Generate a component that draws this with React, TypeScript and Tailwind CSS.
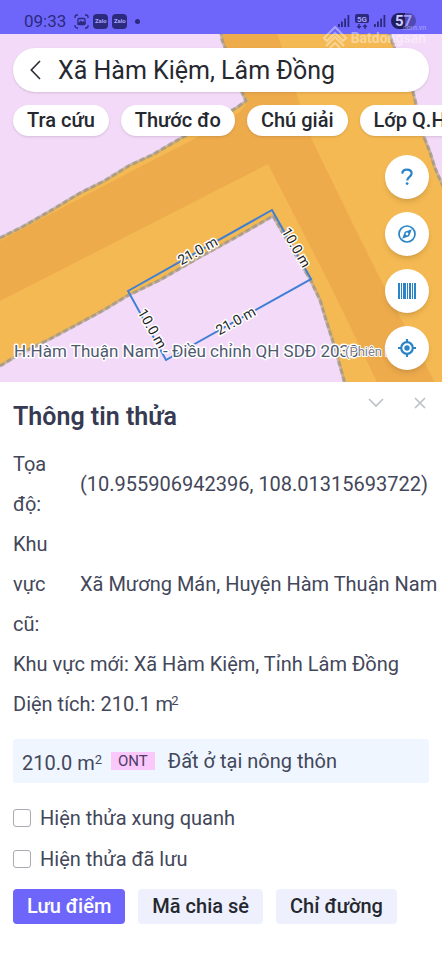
import React, { useState } from "react";

const mapTools = ["help", "compass", "barcode", "locate"] as const;
type Tool = (typeof mapTools)[number];

const toolLabels: Record<Tool, string> = {
  help: "Trợ giúp",
  compass: "La bàn",
  barcode: "Quét mã",
  locate: "Vị trí của tôi",
};

function ToolIcon({ tool }: { tool: Tool }) {
  if (tool === "help") {
    return (
      <svg width="20" height="20" viewBox="0 0 20 20" fill="none" stroke="#2b84c6" strokeWidth="2.200">
        <path d="M5.200 6.600C5.400 4 7.300 2.600 9.900 2.600c2.700 0 4.700 1.500 4.700 3.900 0 3.200-4.400 3.400-4.400 6.900" />
        <circle cx="10.100" cy="16.600" r="1.400" fill="#2b84c6" stroke="none" />
      </svg>
    );
  }
  if (tool === "compass") {
    return (
      <svg width="20" height="20" viewBox="0 0 20 20" fill="none">
        <circle cx="10" cy="10" r="8" stroke="#2b84c6" strokeWidth="1.700" />
        <path fillRule="evenodd" d="M14.800 5.200 12.200 12.200 5.200 14.800 7.800 7.800ZM10 8.600a1.400 1.400 0 1 0 0 2.800 1.400 1.400 0 0 0 0-2.800Z" fill="#2b84c6" />
      </svg>
    );
  }
  if (tool === "barcode") {
    return (
      <svg width="20" height="20" viewBox="0 0 20 20" fill="#2b84c6">
        <path d="M1 2h2v16H1zM4 2h1v16H4zM6 2h3v16H6zM10 2h1v16h-1zM12 2h2v16h-2zM15 2h1v16h-1zM17 2h2v16h-2z" />
      </svg>
    );
  }
  return (
    <svg width="20" height="20" viewBox="0 0 20 20" fill="none" stroke="#2b84c6" strokeWidth="2.200">
      <circle cx="10" cy="10" r="5.800" />
      <circle cx="10" cy="10" r="2.700" fill="#2b84c6" stroke="none" />
      <path d="M10 1v3.500M10 15.500V19M1 10h3.500M15.500 10H19" />
    </svg>
  );
}

const upperEdge = "M0 238 22 227 50 211 80 193 104 181 130 165 152 155 183 137 212 122 236 108 246 101 240 88 230 60 222 40 221 32";
const rightEdge = "M389 32 394 47 404 68 413 92 417 108 424 137 430 152 435 168 442 184 460 220";
const lowerEdge = "M0 366 20 354 50 339 80 323 104 310 127 296 160 280 200 257 240 235 273 216 288 242 310 279 320 300 326 320 334 345 340 366 345 384";

function ZoneEdge({ d }: { d: string }) {
  return (
    <g fill="none" strokeLinejoin="round">
      <path d={d} stroke="#b0a08c" strokeOpacity="0.600" strokeWidth="3" />
      <path d={d} stroke="#98927f" strokeOpacity="0.600" strokeWidth="3" strokeDasharray="5 3" />
    </g>
  );
}

const sides = [
  { x: 200, y: 255, angle: -29, text: "21.0 m" },
  { x: 292, y: 250, angle: 60, text: "10.0 m" },
  { x: 238, y: 325, angle: -29, text: "21.0 m" },
  { x: 148, y: 331, angle: 60, text: "10.0 m" },
];

function ParcelMap() {
  return (
    <svg
      className="absolute inset-0 h-full w-full"
      viewBox="0 34 442 348"
      preserveAspectRatio="xMidYMid slice"
      fontFamily='Roboto, "Noto Sans", sans-serif'
    >
      <rect x="0" y="34" width="442" height="348" fill="#f3daf8" />
      <path
        fill="#f4b952"
        d="M0 238 22 227 50 211 80 193 104 181 130 165 152 155 183 137 212 122 236 108 246 101 240 88 230 60 222 40 221 32 389 32 394 47 404 68 413 92 417 108 424 137 430 152 435 168 442 184V384H345L340 366 334 345 326 320 320 300 310 279 288 242 273 216 240 235 200 257 160 280 127 296 104 310 80 323 50 339 20 354 0 366Z"
      />
      <path
        fill="#eeab4c"
        d="M0 241 60 209 130 172 200 136 240 112 248 101 241 88 231 60 223 40V32H277L296 92 312 140 350 218 392 302 436 384H378L330 285 268 164 0 301Z"
      />
      <ZoneEdge d={upperEdge} />
      <ZoneEdge d={rightEdge} />
      <ZoneEdge d={lowerEdge} />
      <path d="M128 291 272 210 311 279 166 360Z" fill="none" stroke="#3f7fd4" strokeWidth="2" />
      <g fontSize="14" textAnchor="middle" fill="#1f1f24" stroke="#fff" strokeWidth="3" strokeLinejoin="round" paintOrder="stroke">
        {sides.map((s) => (
          <text key={`${s.x}-${s.y}`} transform={`translate(${s.x} ${s.y}) rotate(${s.angle})`}>
            {s.text}
          </text>
        ))}
      </g>
      <g fill="#4f5a70" stroke="#fff" strokeWidth="3" strokeLinejoin="round" paintOrder="stroke">
        <text x="14" y="357" fontSize="17">H.Hàm Thuận Nam - Điều chỉnh QH SDĐ 2030</text>
        <text x="345" y="356" fontSize="13" fill="#7d7f92" strokeWidth="2">(Phiên bản</text>
      </g>
    </svg>
  );
}

function SignalBars() {
  return (
    <svg width="12" height="12" viewBox="0 0 12 12" fill="#2c2a7c">
      <path d="M0 9h1.800v3H0zM3 6.500h1.800V12H3zM6.200 3.500H8V12H6.200zM9.500 0h1.800v12H9.500z" />
    </svg>
  );
}

function ZaloBadge() {
  return (
    <span className="flex h-[15px] w-[15px] items-center justify-center rounded-[4px] bg-[#2c2a7c] text-[6px] font-bold leading-none text-[#a9a4ff]">
      Zalo
    </span>
  );
}

function StatusBar() {
  return (
    <header className="flex h-[34px] items-center justify-between bg-[#6e66fb] pl-6 pr-[26px] pt-2 text-[#2c2a7c]">
      <div className="flex items-center gap-1">
        <span className="mr-1 text-[17px] leading-5">09:33</span>
        <svg width="15" height="15" viewBox="0 0 15 15" fill="none" stroke="#2c2a7c" strokeWidth="1.300">
          <path d="M1 4V3a2 2 0 0 1 2-2h1M11 1h1a2 2 0 0 1 2 2v1M14 11v1a2 2 0 0 1-2 2h-1M4 14H3a2 2 0 0 1-2-2v-1" />
          <rect x="4" y="4.500" width="7" height="6" rx="1" />
          <path d="m4.500 10 2.300-2.500 1.500 1.300 1.200-1 1.500 1.700z" fill="#2c2a7c" />
        </svg>
        <ZaloBadge />
        <ZaloBadge />
        <span className="ml-1 h-[5px] w-[5px] rounded-full bg-[#2c2a7c]" />
      </div>
      <div className="flex items-center gap-[5px]">
        <SignalBars />
        <svg width="14" height="15" viewBox="0 0 14 15">
          <rect width="14" height="9" rx="2" fill="#2c2a7c" />
          <text x="7" y="7.500" fontSize="8" fontWeight="700" textAnchor="middle" fill="#a9a4ff" fontFamily="Roboto, sans-serif">5G</text>
          <path d="M4 15 1.500 12h1.800v-2h1.400v2h1.800zM10 10l2.500 3h-1.800v2H9.300v-2H7.500z" fill="#2c2a7c" />
        </svg>
        <SignalBars />
        <span className="flex h-4 w-[25px] items-center justify-center rounded-full bg-linear-to-r from-[#211f5e] from-55% to-[#5049b4] to-55% text-[15px] font-bold leading-none text-[#cfcbff]">
          5<span className="text-[#a19bf5]">7</span>
        </span>
      </div>
    </header>
  );
}

function Watermark() {
  return (
    <div className="pointer-events-none absolute right-4 top-[26px] z-10 flex items-start gap-1 text-white opacity-40">
      <svg width="24" height="24" viewBox="0 0 24 24" fill="none" stroke="currentColor" strokeWidth="2">
        <path d="M1 12 12 1l11 11-3 3-8-8-8 8zM3 20l9-9 9 9M7 22l5-5 5 5" />
      </svg>
      <div className="flex flex-col items-end">
        <span className="text-[7px] leading-[5px]">.com.vn</span>
        <span className="text-[14px] font-bold leading-[14px]">Batdongsan</span>
      </div>
    </div>
  );
}

function CheckOption({ label }: { label: string }) {
  const [on, setOn] = useState(false);
  return (
    <label className="flex items-center gap-[9px]">
      <input
        type="checkbox"
        checked={on}
        onChange={(e) => setOn(e.target.checked)}
        className="h-[18px] w-[18px] appearance-none rounded-[3px] border border-[#a9abb3] bg-white checked:bg-[#6e66fb]"
      />
      {label}
    </label>
  );
}

const chips = ["Tra cứu", "Thước đo", "Chú giải", "Lớp Q.H"];

export default function App() {
  return (
    <div className="relative min-h-screen overflow-hidden bg-white font-[Roboto,'Noto_Sans',sans-serif] text-[#43475a]">
      <StatusBar />
      <Watermark />

      <section className="relative overflow-hidden pb-3 pt-[14px]">
        <ParcelMap />
        <div className="relative z-20 mx-[13px] flex h-11 items-center rounded-full bg-white pl-4 shadow">
          <button type="button" aria-label="Quay lại" className="flex shrink-0">
            <svg width="12" height="20" viewBox="0 0 12 20" fill="none" stroke="#2a2c33" strokeWidth="1.600">
              <path d="M11 1 2.300 10l8.700 9" />
            </svg>
          </button>
          <input
            type="text"
            aria-label="Tìm kiếm khu vực"
            defaultValue="Xã Hàm Kiệm, Lâm Đồng"
            className="ml-[17px] h-full min-w-0 flex-1 bg-transparent text-[25px] text-[#26282f] outline-none"
          />
        </div>

        <nav className="relative -mb-1 mt-[13px] flex gap-3 overflow-x-hidden pb-1 pl-[13px]">
          {chips.map((c) => (
            <button
              key={c}
              type="button"
              className="h-[31px] shrink-0 whitespace-nowrap rounded-full bg-white px-[14px] text-[20px] font-medium leading-[31px] text-[#26282f] shadow"
            >
              {c}
            </button>
          ))}
        </nav>

        <div className="relative mr-[13px] mt-[19px] flex flex-col items-end gap-[13px]">
          {mapTools.map((t) => (
            <button
              key={t}
              type="button"
              aria-label={toolLabels[t]}
              className="flex h-11 w-11 items-center justify-center rounded-full bg-white shadow-md"
            >
              <ToolIcon tool={t} />
            </button>
          ))}
        </div>
      </section>

      <section className="px-[13px] pb-9 text-[20px] leading-10">
        <div className="flex items-start justify-between pt-[15px]">
          <h1 className="text-[25px] font-semibold leading-10 text-[#363a52]">Thông tin thửa</h1>
          <div className="flex items-center gap-[30px] pr-[3px]">
            <button type="button" aria-label="Thu gọn">
              <svg width="16" height="12" viewBox="0 0 16 12" fill="none" stroke="#bfc1c9" strokeWidth="1.700">
                <path d="m1 2 7 7 7-7" />
              </svg>
            </button>
            <button type="button" aria-label="Đóng">
              <svg width="12" height="12" viewBox="0 0 12 12" fill="none" stroke="#bfc1c9" strokeWidth="1.700">
                <path d="m1 1 10 10M11 1 1 11" />
              </svg>
            </button>
          </div>
        </div>

        <dl className="mt-[7px]">
          <div className="flex items-center">
            <dt className="w-[67px] shrink-0 pr-5">Tọa độ:</dt>
            <dd className="whitespace-nowrap">(10.955906942396, 108.01315693722)</dd>
          </div>
          <div className="flex items-center">
            <dt className="w-[67px] shrink-0 pr-5">Khu vực cũ:</dt>
            <dd className="whitespace-nowrap">Xã Mương Mán, Huyện Hàm Thuận Nam</dd>
          </div>
          <div className="flex gap-[5px]">
            <dt>Khu vực mới:</dt>
            <dd>Xã Hàm Kiệm, Tỉnh Lâm Đồng</dd>
          </div>
          <div className="flex gap-[5px]">
            <dt>Diện tích:</dt>
            <dd>
              210.1 m<sup className="-ml-[2px] text-[13px]">2</sup>
            </dd>
          </div>
        </dl>

        <div className="mt-[15px] flex h-11 items-center rounded-[3px] bg-[#eff6ff] px-[9px]">
          <span className="pt-1">
            210.0 m<sup className="text-[13px]">2</sup>
          </span>
          <span className="ml-[9px] bg-[#fbc8fb] px-[7px] text-[15px] leading-[18px] text-[#4c3c66]">ONT</span>
          <span className="ml-[13px]">Đất ở tại nông thôn</span>
        </div>

        <div className="mt-[15px] flex flex-col gap-px">
          <CheckOption label="Hiện thửa xung quanh" />
          <CheckOption label="Hiện thửa đã lưu" />
        </div>

        <div className="mt-[10px] flex gap-[13px] font-medium leading-[35px] text-[#26282f]">
          <button type="button" className="rounded-[4px] bg-[#6e66fb] px-[14px] text-white">Lưu điểm</button>
          <button type="button" className="rounded-[4px] bg-[#eef0fd] px-[14px]">Mã chia sẻ</button>
          <button type="button" className="rounded-[4px] bg-[#eef0fd] px-[14px]">Chỉ đường</button>
        </div>
      </section>
    </div>
  );
}
